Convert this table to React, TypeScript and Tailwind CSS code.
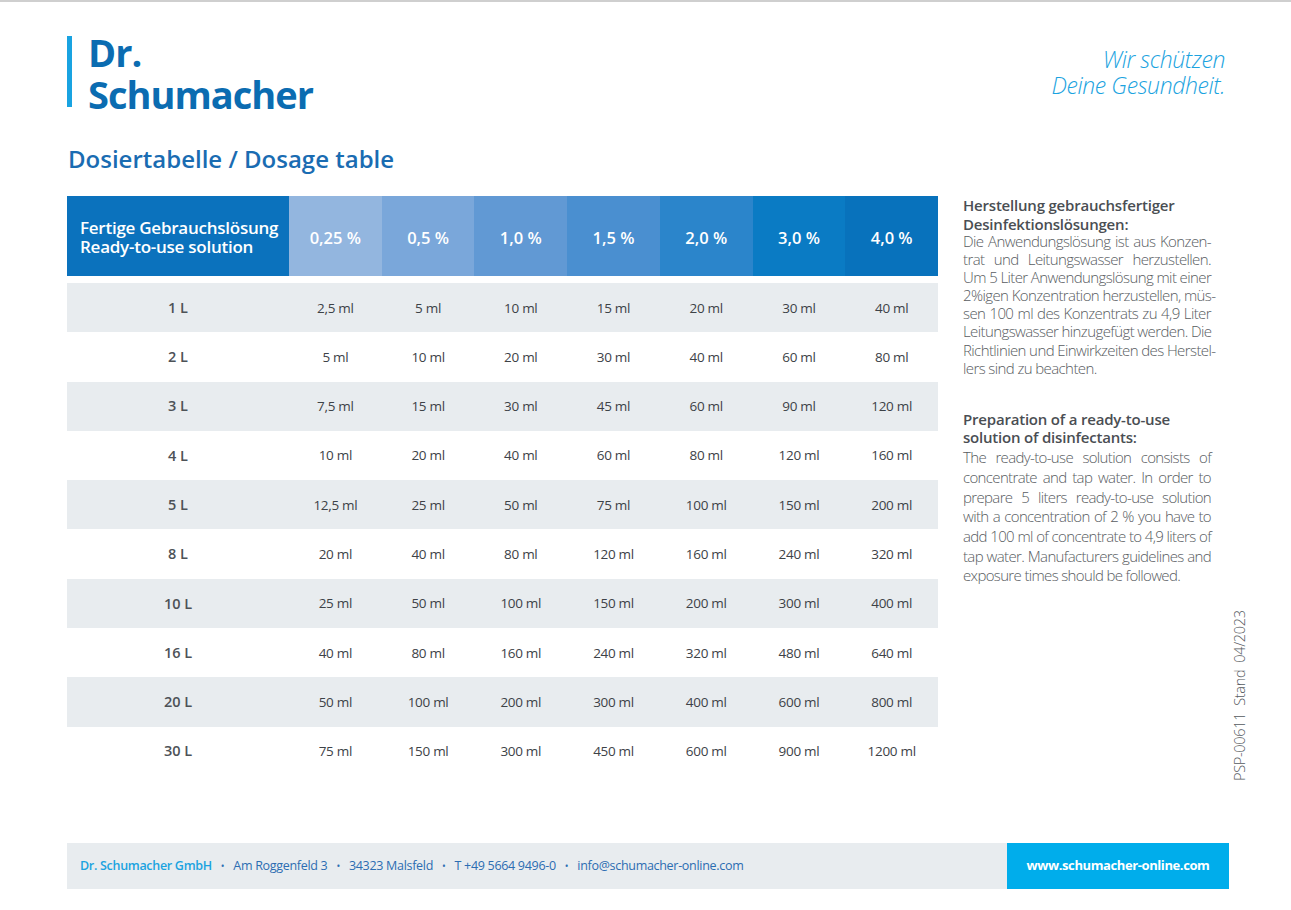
import React from "react";

const percents = ["0,25 %", "0,5 %", "1,0 %", "1,5 %", "2,0 %", "3,0 %", "4,0 %"];
const headBg = [
  "bg-[#93b6df]",
  "bg-[#7aa7da]",
  "bg-[#6199d4]",
  "bg-[#4a8fd0]",
  "bg-[#2b85cb]",
  "bg-[#0a7bc4]",
  "bg-[#0872bc]",
];

const rows: [string, string[]][] = [
  ["1 L", ["2,5 ml", "5 ml", "10 ml", "15 ml", "20 ml", "30 ml", "40 ml"]],
  ["2 L", ["5 ml", "10 ml", "20 ml", "30 ml", "40 ml", "60 ml", "80 ml"]],
  ["3 L", ["7,5 ml", "15 ml", "30 ml", "45 ml", "60 ml", "90 ml", "120 ml"]],
  ["4 L", ["10 ml", "20 ml", "40 ml", "60 ml", "80 ml", "120 ml", "160 ml"]],
  ["5 L", ["12,5 ml", "25 ml", "50 ml", "75 ml", "100 ml", "150 ml", "200 ml"]],
  ["8 L", ["20 ml", "40 ml", "80 ml", "120 ml", "160 ml", "240 ml", "320 ml"]],
  ["10 L", ["25 ml", "50 ml", "100 ml", "150 ml", "200 ml", "300 ml", "400 ml"]],
  ["16 L", ["40 ml", "80 ml", "160 ml", "240 ml", "320 ml", "480 ml", "640 ml"]],
  ["20 L", ["50 ml", "100 ml", "200 ml", "300 ml", "400 ml", "600 ml", "800 ml"]],
  ["30 L", ["75 ml", "150 ml", "300 ml", "450 ml", "600 ml", "900 ml", "1200 ml"]],
];

const p1 = [
  "Die Anwendungslösung ist aus Konzen-",
  "trat und Leitungswasser herzustellen.",
  "Um 5 Liter Anwendungslösung mit einer",
  "2%igen Konzentration herzustellen, müs-",
  "sen 100 ml des Konzentrats zu 4,9 Liter",
  "Leitungswasser hinzugefügt werden. Die",
  "Richtlinien und Einwirkzeiten des Herstel-",
  "lers sind zu beachten.",
];
const p2 = [
  "The ready-to-use solution consists of",
  "concentrate and tap water. In order to",
  "prepare 5 liters ready-to-use solution",
  "with a concentration of 2 % you have to",
  "add 100 ml of concentrate to 4,9 liters of",
  "tap water. Manufacturers guidelines and",
  "exposure times should be followed.",
];

function Para({ lines, cls }: { lines: string[]; cls: string }) {
  return (
    <div className={`font-light text-[#585c61] ${cls}`}>
      {lines.map((l, i) => (
        <div
          key={i}
          className={
            i < lines.length - 1
              ? "whitespace-nowrap text-justify [text-align-last:justify]"
              : "whitespace-nowrap text-left"
          }
        >
          {l}
        </div>
      ))}
    </div>
  );
}

export default function App() {
  return (
    <div className="w-[1291px] h-[910px] bg-white border-t-2 border-[#cfcfcf] font-['Open_Sans',sans-serif] flex flex-col overflow-hidden">
      {/* header */}
      <div className="flex justify-between pl-[67px] pr-[66px] pt-[34px]">
        <div className="flex">
          <div className="w-[5px] h-[71px] bg-[#19a3e1]" />
          <div className="ml-[16px] -mt-[5px] text-[38px] leading-[42px] font-bold text-[#0b6cb1] tracking-[-1px]">
            <div>Dr.</div>
            <div>Schumacher</div>
          </div>
        </div>
        <div className="mt-[10px] text-right italic font-light text-[23px] leading-[26px] text-[#1ba3e0] tracking-[-0.4px]">
          <div>Wir schützen</div>
          <div>Deine Gesundheit.</div>
        </div>
      </div>

      <div className="pl-[68px] mt-[29px] text-[24px] leading-[30px] font-semibold text-[#1a6cb2]">
        Dosiertabelle / Dosage table
      </div>

      {/* main */}
      <div className="flex pl-[67px] mt-[22px]">
        <div className="w-[871px]">
          <div className="flex h-[80px]">
            <div className="w-[222px] bg-[#0b72bd] pl-[13px] flex flex-col justify-center text-white font-semibold text-[17px] leading-[19px] tracking-[-0.25px] pt-[2px]">
              <div>Fertige Gebrauchslösung</div>
              <div>Ready-to-use solution</div>
            </div>
            {percents.map((p, i) => (
              <div
                key={p}
                className={`flex-1 ${headBg[i]} flex items-center justify-center text-white font-semibold text-[16.5px] pt-[4px]`}
              >
                {p}
              </div>
            ))}
          </div>
          <div className="mt-[7px]">
            {rows.map(([l, vals], r) => (
              <div
                key={l}
                className={`flex h-[49.3px] items-center ${r % 2 === 0 ? "bg-[#e8ecef]" : "bg-white"}`}
              >
                <div className="w-[222px] text-center font-semibold text-[14.5px] text-[#4d5257]">{l}</div>
                {vals.map((v, i) => (
                  <div key={i} className="flex-1 text-center text-[13.5px] text-[#3d4247] tracking-[-0.3px]">
                    {v}
                  </div>
                ))}
              </div>
            ))}
          </div>
        </div>

        <div className="ml-[25px] w-[248px]">
          <div className="text-[15px] leading-[18.5px] font-semibold text-[#4a4e53] tracking-[-0.2px]">
            <div>Herstellung gebrauchsfertiger</div>
            <div>Desinfektionslösungen:</div>
          </div>
          <div className="-mt-[1px]">
            <Para lines={p1} cls="text-[15px] leading-[18.1px] tracking-[-0.6px]" />
          </div>
          <div className="mt-[33px] text-[15px] leading-[18.5px] font-semibold text-[#4a4e53] tracking-[-0.2px]">
            <div>Preparation of a ready-to-use</div>
            <div>solution of disinfectants:</div>
          </div>
          <div className="mt-[1.5px]">
            <Para lines={p2} cls="text-[15px] leading-[19.7px] tracking-[-0.65px]" />
          </div>
        </div>

        <div className="ml-[18px] mt-[413px] h-[172px] flex justify-center">
          <div className="[writing-mode:vertical-rl] rotate-180 text-[14.5px] font-light text-[#55595e] tracking-[-0.3px] whitespace-pre">
            PSP-00611  Stand  04/2023
          </div>
        </div>
      </div>

      {/* footer */}
      <div className="flex ml-[67px] w-[1162px] h-[46px] mt-auto mb-[21px]">
        <div className="flex-1 bg-[#e8ecef] flex items-center pl-[13px] text-[12.5px] tracking-[-0.3px] text-[#2c6db2]">
          <span className="text-[#1ba3e0] font-semibold">Dr. Schumacher GmbH</span>
          <span className="mx-[9px] text-[10px]">•</span>
          <span>Am Roggenfeld 3</span>
          <span className="mx-[9px] text-[10px]">•</span>
          <span>34323 Malsfeld</span>
          <span className="mx-[9px] text-[10px]">•</span>
          <span>T +49 5664 9496-0</span>
          <span className="mx-[9px] text-[10px]">•</span>
          <span>info@schumacher-online.com</span>
        </div>
        <div className="w-[222px] bg-[#00adeb] flex items-center justify-center text-white font-bold text-[13px] tracking-[-0.4px]">
          www.schumacher-online.com
        </div>
      </div>
    </div>
  );
}
